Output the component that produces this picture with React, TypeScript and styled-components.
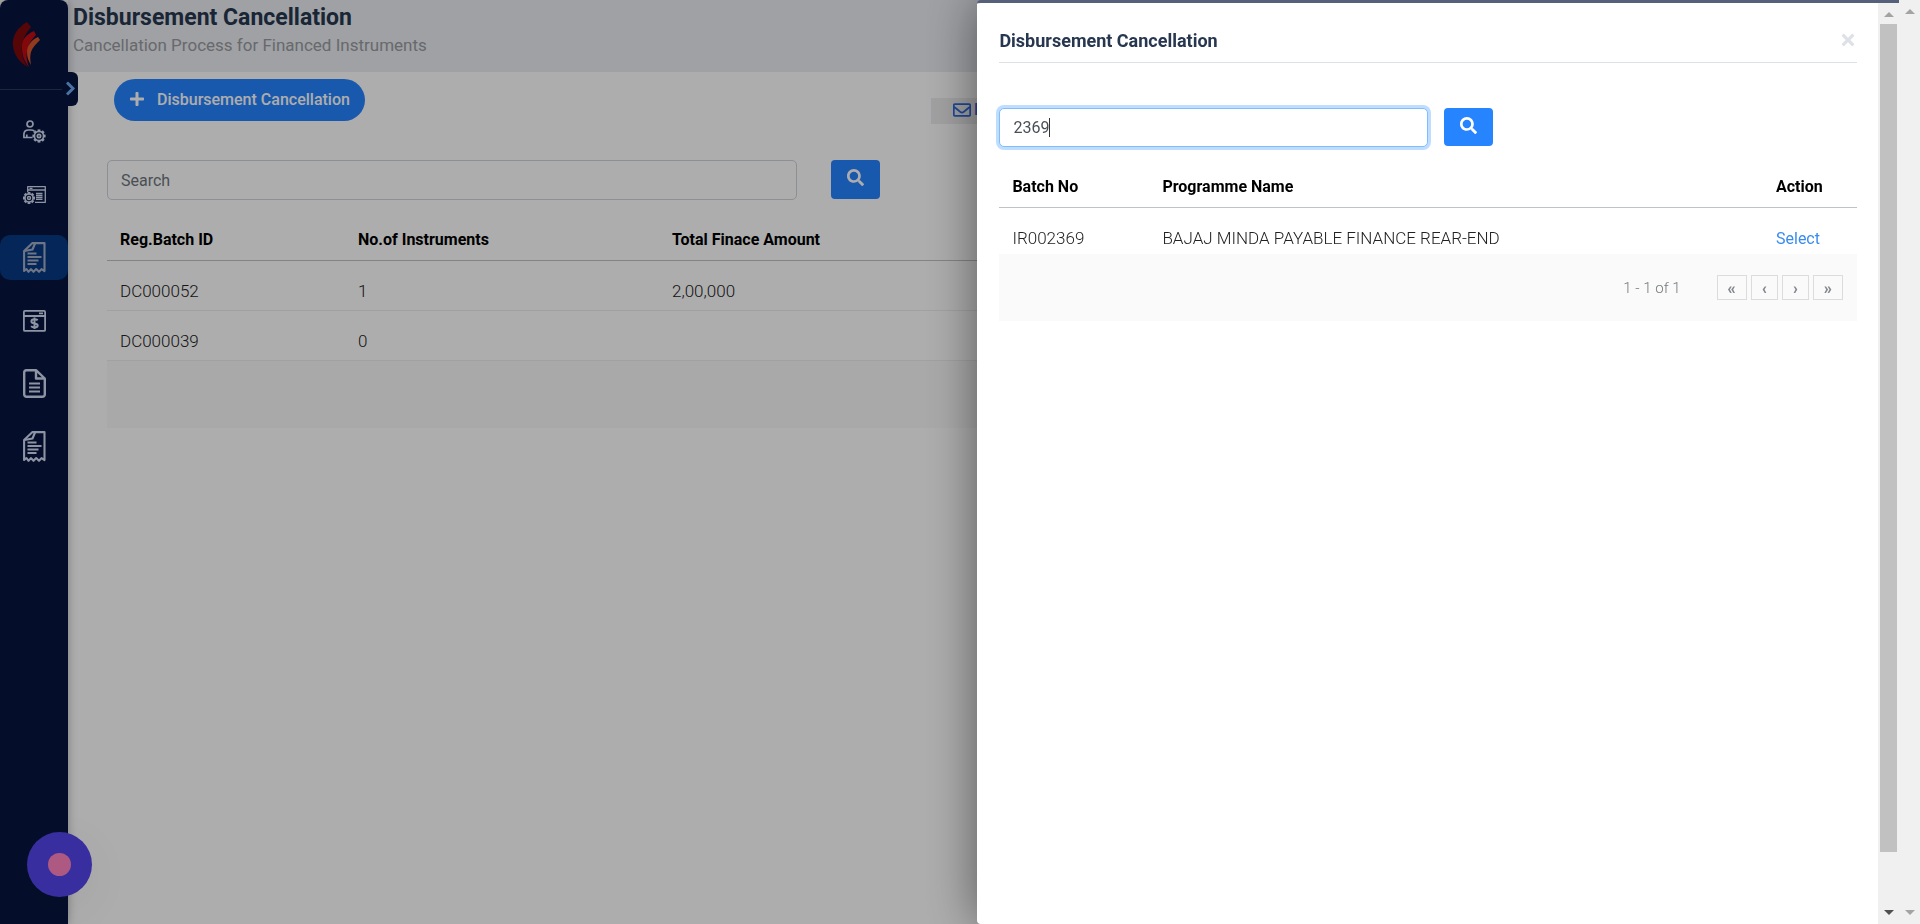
import React, { useEffect, useRef } from 'react';
import styled, { createGlobalStyle, css } from 'styled-components';
import { FaPlus, FaSearch, FaTimes, FaChevronRight, FaRegEnvelope } from 'react-icons/fa';

const GlobalStyle = createGlobalStyle`
  * { box-sizing: border-box; }
  body {
    margin: 0;
    background: #fff;
    color: #333;
    font-family: Roboto, "Liberation Sans", sans-serif;
    font-size: 16px;
    overflow: hidden;
  }
  button, input { font: inherit; }
`;

const Shell = styled.div`
  display: flex;
  min-height: 100vh;
`;

const Sidebar = styled.nav`
  position: relative;
  z-index: 1;
  width: 68px;
  flex: none;
  background: #07163f;
  border-radius: 8px 8px 0 0;
  box-shadow: 0 0 10px rgba(0, 0, 0, 0.3);
`;

const Brand = styled.div`
  height: 90px;
  margin-right: 6px;
  padding: 22px 0 0 12px;
  border-bottom: 1px solid #2c3858;
`;

const ToggleButton = styled.button`
  position: absolute;
  top: 72px;
  right: -10px;
  width: 16px;
  height: 34px;
  padding: 0 0 2px;
  border: 0;
  border-radius: 0 6px 6px 0;
  background: #07163f;
  color: #6fa5f0;
  display: flex;
  align-items: center;
  justify-content: center;

  svg {
    flex: none;
    stroke: currentColor;
    stroke-width: 32;
  }
`;

const Menu = styled.ul`
  list-style: none;
  margin: 0;
  padding: 19px 0 0;
  display: flex;
  flex-direction: column;
  gap: 18px;
`;

const MenuLink = styled.a<{ $active?: boolean }>`
  display: flex;
  align-items: center;
  justify-content: center;
  height: 45px;
  border-radius: 10px;
  color: ${(p) => (p.$active ? '#a3afc6' : '#d0daf0')};
  ${(p) => p.$active && css`background: #073983;`}
`;

const Main = styled.main`
  flex: 1;
  min-width: 0;
`;

const PageHeader = styled.header`
  height: 72px;
  padding: 5px 5px 0;
  background: #ebedf2;
`;

const PageTitle = styled.h1`
  margin: 0;
  font-size: 23px;
  line-height: 26px;
  font-weight: 700;
  color: #27374f;
`;

const PageSubtitle = styled.p`
  margin: 0;
  font-size: 17px;
  line-height: 28px;
  color: #999ba1;
`;

const PageBody = styled.div`
  padding: 7px 39px;
`;

const ActionBar = styled.div`
  display: flex;
  height: 42px;
  padding: 0 7px;
`;

const PillButton = styled.button`
  display: flex;
  align-items: center;
  gap: 12px;
  height: 42px;
  padding: 0 15px 2px;
  border: 0;
  border-radius: 21px;
  background: #2684ff;
  color: #fff;
  font-weight: 500;
`;

const MailLink = styled.a`
  position: absolute;
  top: 98px;
  left: 931px;
  display: flex;
  align-items: center;
  gap: 3px;
  height: 26px;
  padding: 0 22px 3px;
  background: #eeeef0;
  color: #2f6ae0;
  font-weight: 500;
  text-decoration: none;
`;

const SearchForm = styled.form<{ $gap: number }>`
  position: relative;
  display: flex;
  gap: ${(p) => p.$gap}px;
`;

const SearchInput = styled.input<{ $width: string; $compact?: boolean }>`
  width: ${(p) => p.$width};
  height: ${(p) => (p.$compact ? 39 : 40)}px;
  padding: 0 13px;
  border: 1px solid #ced4da;
  border-radius: 5px;
  background: #fff;
  color: #495057;
  caret-color: transparent;
  outline: none;
  &::placeholder { color: #6c757d; opacity: 1; }
  &:focus {
    border-color: #80bdff;
    box-shadow: 0 0 0 3px #bfdeff;
  }
`;

const Caret = styled.span`
  position: absolute;
  top: 10px;
  left: 50px;
  width: 1px;
  height: 19px;
  background: #333;
`;

const SearchButton = styled.button<{ $compact?: boolean }>`
  width: 49px;
  height: ${(p) => (p.$compact ? 38 : 39)}px;
  padding: 0 0 4px;
  border: 0;
  border-radius: 4px;
  background: #2684ff;
  color: #fff;
  display: flex;
  align-items: center;
  justify-content: center;
`;

const PageSearch = styled.div`
  margin: 39px 0 19px;
`;

const DataTable = styled.table`
  width: 100%;
  border-spacing: 0;
  table-layout: fixed;
`;

const HeadCell = styled.th<{ $width?: string }>`
  width: ${(p) => p.$width ?? 'auto'};
  height: 42px;
  padding: 0 13px;
  border-bottom: 1px solid #bfc3c7;
  color: #000;
  font-size: 16px;
  font-weight: 700;
  text-align: left;
`;

const Cell = styled.td<{ $last?: boolean }>`
  height: ${(p) => (p.$last ? 46 : 50)}px;
  padding: ${(p) => (p.$last ? '14px 13px 0' : '10px 13px 0')};
  border-bottom: ${(p) => (p.$last ? '0' : '1px solid #eceef0')};
  color: #222;
  font-size: 17px;
  font-weight: 300;
`;

const TableFooter = styled.div`
  display: flex;
  align-items: center;
  justify-content: flex-end;
  height: 67px;
  padding: 0 14px;
  background: #fafafa;
`;

const Backdrop = styled.div`
  position: fixed;
  inset: 0;
  z-index: 3;
  background: rgba(0, 0, 0, 0.32);
`;

const ChatButton = styled.button`
  position: fixed;
  left: 27px;
  bottom: 27px;
  z-index: 2;
  width: 65px;
  height: 65px;
  padding: 0;
  border: 0;
  border-radius: 50%;
  background: #5345ea;
  box-shadow: 0 12px 48px rgba(0, 0, 0, 0.06);
  display: flex;
  align-items: center;
  justify-content: center;
`;

const ChatDot = styled.span`
  width: 23px;
  height: 23px;
  border-radius: 50%;
  background: #ff84c0;
`;

const Drawer = styled.aside`
  position: fixed;
  top: 0;
  right: 21px;
  bottom: 0;
  z-index: 4;
  width: 48%;
  display: flex;
  background: #fff;
  border-top: 3px solid #56607a;
  border-radius: 4px 0 0 4px;
  box-shadow: 0 0 50px rgba(0, 0, 0, 0.5);
`;

const DrawerBody = styled.div`
  flex: 1;
  min-width: 0;
  padding: 19px 21px 0 22px;
`;

const DrawerHeader = styled.header`
  display: flex;
  align-items: center;
  justify-content: space-between;
  height: 41px;
  margin-bottom: 45px;
  padding-bottom: 3px;
  border-bottom: 1px solid #dee2e6;
`;

const DrawerTitle = styled.h2`
  margin: 0;
  font-size: 18px;
  font-weight: 700;
  color: #27374f;
`;

const CloseButton = styled.button`
  padding: 0 0 2px;
  border: 0;
  background: none;
  color: #dee2e6;
  display: flex;
`;

const DrawerTable = styled.div`
  margin-top: 19px;
`;

const SelectLink = styled.a`
  color: #3a8bee;
  font-size: 16px;
  font-weight: 400;
  text-decoration: none;
`;

const RangeText = styled.span`
  margin-right: 36px;
  font-size: 15px;
  font-weight: 300;
  color: #75787c;
`;

const Pager = styled.div`
  display: flex;
  gap: 4px;
`;

const PageButton = styled.button`
  height: 25px;
  padding: 2px 10px 0;
  border: 1px solid #dcdcdc;
  background: #fafafa;
  color: #85898f;
  font-weight: 900;
  line-height: 20px;
`;

const ScrollRail = styled.div<{ $outer?: boolean }>`
  display: flex;
  flex-direction: column;
  align-items: center;
  justify-content: space-between;
  width: 21px;
  background: #f0f0f0;
  padding: 9px 0;
  ${(p) => p.$outer && css`
    position: fixed;
    top: 0;
    right: 0;
    bottom: 0;
    z-index: 4;
  `}
`;

const ScrollThumb = styled.div`
  width: 17px;
  flex: 1;
  margin: 7px 0 58px;
  background: #c1c1c1;
`;

const Arrow = styled.span<{ $down?: boolean; $dark?: boolean }>`
  border: 5px solid transparent;
  border-top-width: ${(p) => (p.$down ? 5 : 0)}px;
  border-bottom-width: ${(p) => (p.$down ? 0 : 5)}px;
  border-top-color: ${(p) => (p.$down ? (p.$dark ? '#505050' : '#a3a3a3') : 'transparent')};
  border-bottom-color: ${(p) => (p.$down ? 'transparent' : '#a3a3a3')};
`;

const Logo = () => (
  <svg width="28" height="46" viewBox="0 0 28 46" aria-hidden="true">
    <path d="M15 0C5 6 0 14 1 24c1 9 7 17 15 21-5-6-7-13-6-21 1-8 4-13 9-19Z" fill="#80090c" />
    <path d="M22 9c-9 4-13 10-12 18 0 7 3 13 7 18-3-8-3-13-1-19 1-5 4-9 8-13Z" fill="#c20d12" />
    <path d="M26 15c-7 3-11 9-11 15 0 5 1 8 4 13-1-6-1-9 0-13 1-4 5-8 9-12Z" fill="#d9552c" />
  </svg>
);

const Gear = ({ x, y, r }: { x: number; y: number; r: number }) => (
  <g>
    <circle cx={x} cy={y} r={r} />
    <circle cx={x} cy={y} r={r * 0.36} />
    {[0, 45, 90, 135, 180, 225, 270, 315].map((a) => (
      <path key={a} d={`M${x} ${y - r}v-2`} strokeWidth="2.8" transform={`rotate(${a} ${x} ${y})`} />
    ))}
  </g>
);

const stroke = { fill: 'none', stroke: 'currentColor', strokeWidth: 1.7, strokeLinejoin: 'round' as const };

const UserGearIcon = () => (
  <svg width="23" height="23" viewBox="0 0 23 23" {...stroke}>
    <circle cx="7" cy="4" r="3" />
    <path d="M9.500 17.500H.9v-3c0-3 2-4.500 4.600-4.500h2.500c1.500 0 2.500.4 3.400 1.200M3.800 17v-2.500" />
    <Gear x={16} y={16} r={4.600} />
  </svg>
);

const WindowGearIcon = () => (
  <svg width="23" height="18" viewBox="0 0 23 18" {...stroke} strokeWidth="1.500">
    <path d="M4.700 6V.7h17.600v15.600H12M4.700 4h17.600M6.500 2.300h3M13 7.500h6.500M13 9.500h6.500M13 11.500h6.500M13 13.300h6.500" strokeWidth="1.300" />
    <Gear x={6} y={12} r={4} />
  </svg>
);

const ReceiptIcon = () => (
  <svg width="23" height="31" viewBox="0 0 23 31" {...stroke} strokeWidth="2.100">
    <path d="M1.100 29V9L9.500 1.100H21.500v28l-3-2-2.500 2.700-2.800-2.700-2.700 2.700-2.500-2.700-2.500 2.700L3.500 27Z" />
    <path d="M1.500 9l8-1.500L12 1.500" />
    <path d="M4.500 11.500h9M4.500 15h14M4.500 18.500h11M4.500 22h9" strokeWidth="1.800" />
  </svg>
);

const MoneyWindowIcon = () => (
  <svg width="23" height="22" viewBox="0 0 23 22" {...stroke} strokeWidth="1.800">
    <rect x=".9" y=".9" width="21.200" height="20" rx="1" />
    <path d="M1 6h21M16 3.400h4" />
    <path d="M14.700 10.300c-.8-.8-1.900-1-3.200-1-1.900 0-3.100.8-3.100 2.100 0 2.900 6.300 1.300 6.300 4 0 1.300-1.300 2-3.200 2-1.400 0-2.600-.4-3.400-1.300M11.500 7.500v11.500" strokeWidth="2" />
  </svg>
);

const DocumentIcon = () => (
  <svg width="23" height="29" viewBox="0 0 23 29" {...stroke} strokeWidth="2.400">
    <path d="M13 1.200H3.500A2.300 2.300 0 0 0 1.200 3.500v22a2.300 2.300 0 0 0 2.300 2.300h16a2.300 2.300 0 0 0 2.300-2.300V9.500ZM13 1.200V9.500h8.500" />
    <path d="M6 14.500h11M6 18.500h11M6 22.500h11" strokeWidth="2" />
  </svg>
);

const menu = [
  { label: 'Users', icon: <UserGearIcon /> },
  { label: 'Configuration', icon: <WindowGearIcon /> },
  { label: 'Disbursement', icon: <ReceiptIcon />, active: true },
  { label: 'Payments', icon: <MoneyWindowIcon /> },
  { label: 'Documents', icon: <DocumentIcon /> },
  { label: 'Receipts', icon: <ReceiptIcon /> },
];

const batches = [
  { id: 'DC000052', count: '1', amount: '2,00,000' },
  { id: 'DC000039', count: '0', amount: '' },
];

export default function App() {
  const batchInput = useRef<HTMLInputElement>(null);
  useEffect(() => {
    const el = batchInput.current;
    el?.focus();
    el?.setSelectionRange(el.value.length, el.value.length);
  }, []);

  return (
    <>
      <GlobalStyle />
      <Shell>
        <Sidebar aria-label="Main">
          <Brand><Logo /></Brand>
          <ToggleButton aria-label="Expand menu"><FaChevronRight size={15} /></ToggleButton>
          <Menu>
            {menu.map((m) => (
              <li key={m.label}>
                <MenuLink href="#" aria-label={m.label} $active={m.active}>{m.icon}</MenuLink>
              </li>
            ))}
          </Menu>
        </Sidebar>
        <Main>
          <PageHeader>
            <PageTitle>Disbursement Cancellation</PageTitle>
            <PageSubtitle>Cancellation Process for Financed Instruments</PageSubtitle>
          </PageHeader>
          <PageBody>
            <ActionBar>
              <PillButton><FaPlus size={16} />Disbursement Cancellation</PillButton>
              <MailLink href="#"><FaRegEnvelope size={18} />Help</MailLink>
            </ActionBar>
            <PageSearch>
              <SearchForm $gap={34}>
                <SearchInput $width="calc(39% - 2px)" placeholder="Search" aria-label="Search" />
                <SearchButton type="button" aria-label="Search"><FaSearch size={17} /></SearchButton>
              </SearchForm>
            </PageSearch>
            <DataTable>
              <thead>
                <tr>
                  <HeadCell $width="238px">Reg.Batch ID</HeadCell>
                  <HeadCell $width="314px">No.of Instruments</HeadCell>
                  <HeadCell>Total Finace Amount</HeadCell>
                </tr>
              </thead>
              <tbody>
                {batches.map((b) => (
                  <tr key={b.id}>
                    <Cell>{b.id}</Cell>
                    <Cell>{b.count}</Cell>
                    <Cell>{b.amount}</Cell>
                  </tr>
                ))}
              </tbody>
            </DataTable>
            <TableFooter />
          </PageBody>
        </Main>
      </Shell>
      <ChatButton aria-label="Open chat"><ChatDot /></ChatButton>
      <Backdrop />
      <Drawer role="dialog" aria-labelledby="drawer-title">
        <DrawerBody>
          <DrawerHeader>
            <DrawerTitle id="drawer-title">Disbursement Cancellation</DrawerTitle>
            <CloseButton aria-label="Close"><FaTimes size={18} /></CloseButton>
          </DrawerHeader>
          <SearchForm $gap={16}>
            <SearchInput ref={batchInput} $compact $width="50%" defaultValue="2369" aria-label="Batch number" />
            <Caret aria-hidden="true" />
            <SearchButton type="button" $compact aria-label="Search batches"><FaSearch size={17} /></SearchButton>
          </SearchForm>
          <DrawerTable>
            <DataTable>
              <thead>
                <tr>
                  <HeadCell $width="150px">Batch No</HeadCell>
                  <HeadCell>Programme Name</HeadCell>
                  <HeadCell $width="94px">Action</HeadCell>
                </tr>
              </thead>
              <tbody>
                <tr>
                  <Cell $last>IR002369</Cell>
                  <Cell $last>BAJAJ MINDA PAYABLE FINANCE REAR-END</Cell>
                  <Cell $last><SelectLink href="#">Select</SelectLink></Cell>
                </tr>
              </tbody>
            </DataTable>
            <TableFooter>
              <RangeText>1 - 1 of 1</RangeText>
              <Pager>
                <PageButton aria-label="First page">«</PageButton>
                <PageButton aria-label="Previous page">‹</PageButton>
                <PageButton aria-label="Next page">›</PageButton>
                <PageButton aria-label="Last page">»</PageButton>
              </Pager>
            </TableFooter>
          </DrawerTable>
        </DrawerBody>
        <ScrollRail aria-hidden="true">
          <Arrow />
          <ScrollThumb />
          <Arrow $down $dark />
        </ScrollRail>
      </Drawer>
      <ScrollRail $outer aria-hidden="true">
        <Arrow />
        <Arrow $down />
      </ScrollRail>
    </>
  );
}
